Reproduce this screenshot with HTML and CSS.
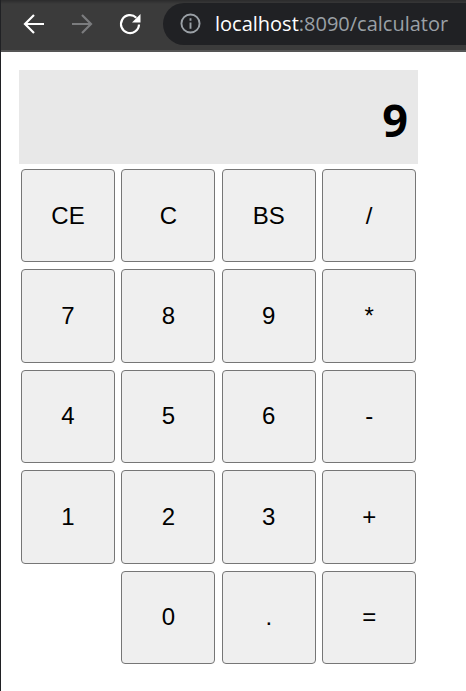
FILE: index.html
```html
<!DOCTYPE html>
<html lang="en">
<head>
    <meta charset="UTF-8">
    <meta name="viewport" content="width=device-width, initial-scale=1.0">
    <title>Calculator</title>
    <link rel="stylesheet" href="styles.css">
</head>
<body>
    <header class="toolbar">
        <svg class="nav-icon" viewBox="0 0 24 24" fill="none" stroke="#fff" stroke-width="2.2">
            <path d="M22 12H3M12 3l-9 9 9 9"/>
        </svg>
        <svg class="nav-icon" viewBox="0 0 24 24" fill="none" stroke="#7b7c7e" stroke-width="2.2">
            <path d="M2 12h19M12 3l9 9-9 9"/>
        </svg>
        <svg class="nav-icon" viewBox="0 0 24 24" fill="none" stroke="#fff" stroke-width="2.2">
            <path d="M21 12.500a9 9 0 1 1-2.700-6.800"/>
            <path d="M22.500 2v8.500h-8.500z" fill="#fff" stroke="none"/>
        </svg>
        <div class="address">
            <svg class="info-icon" viewBox="0 0 22 22" fill="none" stroke="#9aa0a6" stroke-width="2">
                <circle cx="11" cy="11" r="9.500"/>
                <path d="M11 10v6.500M11 5.500v2.500"/>
            </svg>
            <span class="host">localhost</span><span class="path">:8090/calculator</span>
        </div>
    </header>

    <main class="calculator">
        <div class="display">9</div>
        <div class="keys">
            <button>CE</button>
            <button>C</button>
            <button>BS</button>
            <button>/</button>
            <button>7</button>
            <button>8</button>
            <button>9</button>
            <button>*</button>
            <button>4</button>
            <button>5</button>
            <button>6</button>
            <button>-</button>
            <button>1</button>
            <button>2</button>
            <button>3</button>
            <button>+</button>
            <button class="zero">0</button>
            <button>.</button>
            <button>=</button>
        </div>
    </main>
</body>
</html>
```

FILE: styles.css
```css
html, body {
    height: 100%;
}
body {
    margin: 0;
    background: #fff;
    border-left: 1px solid #202124;
    font-family: "Liberation Sans", Arial, sans-serif;
    overflow: hidden;
}
.toolbar {
    display: flex;
    align-items: center;
    height: 52px;
    padding: 3px 0 6px 21px;
    box-sizing: border-box;
    background: linear-gradient(#2b2b2c, #3b3b3b 4px);
    border-bottom: 2px solid #555;
}
.nav-icon {
    width: 24px;
    height: 24px;
    margin-right: 24px;
    flex: none;
}
.address {
    display: flex;
    align-items: center;
    flex: 1;
    height: 42px;
    margin-left: -3px;
    padding-left: 17px;
    background: #202124;
    border-radius: 21px 0 0 21px;
    font-family: "Open Sans", sans-serif;
    font-size: 20px;
    white-space: nowrap;
    overflow: hidden;
}
.info-icon {
    width: 21px;
    height: 21px;
    margin-right: 14px;
    flex: none;
}
.host {
    color: #fff;
}
.path {
    color: #9aa0a6;
}
.calculator {
    width: 399px;
    margin: 18px 0 0 18px;
}
.display {
    height: 94px;
    padding-right: 10px;
    background: #e8e8e8;
    color: #000;
    font-family: "Open Sans", sans-serif;
    font-size: 45px;
    font-weight: bold;
    line-height: 99px;
    text-align: right;
    box-sizing: border-box;
}
.keys {
    display: grid;
    grid-template-columns: repeat(4, 94px);
    grid-auto-rows: 93.4px;
    gap: 7px 6.4px;
    margin-top: 5px;
    padding: 0 2px;
}
.keys button {
    padding: 0;
    background: #efefef;
    border: 1px solid #767676;
    border-radius: 4px;
    color: #000;
    font-family: inherit;
    font-size: 24px;
}
.zero {
    grid-column: 2;
}
```
